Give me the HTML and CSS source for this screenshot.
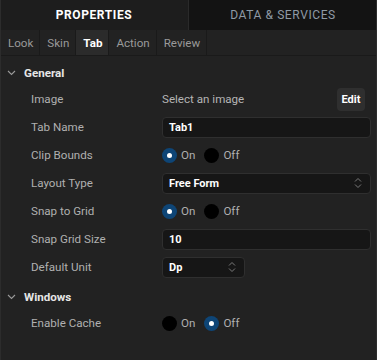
FILE: index.html
```html
<!DOCTYPE html>
<html lang="en">
<head>
	<meta charset="UTF-8">
	<meta name="viewport" content="width=device-width, initial-scale=1.0">
	<title>Properties</title>
	<link rel="stylesheet" href="styles.css">
</head>
<body>
	<div class="panel">
		<div class="top-tabs">
			<div class="top-tab active">PROPERTIES</div>
			<div class="top-tab">DATA &amp; SERVICES</div>
		</div>
		<div class="sub-tabs">
			<div class="sub-tab">Look</div>
			<div class="sub-tab">Skin</div>
			<div class="sub-tab active">Tab</div>
			<div class="sub-tab">Action</div>
			<div class="sub-tab">Review</div>
		</div>

		<div class="content">
			<div class="section">
				<div class="section-head">
					<svg class="chev" width="9" height="6" viewBox="0 0 9 6"><path d="M1 1 L4.5 4.5 L8 1" fill="none" stroke="#9a9a9a" stroke-width="1.1"/></svg>
					<span>General</span>
				</div>
				<div class="row">
					<div class="label">Image</div>
					<div class="value value-split">
						<span class="muted">Select an image</span>
						<button class="edit-btn">Edit</button>
					</div>
				</div>
				<div class="row">
					<div class="label">Tab Name</div>
					<div class="value"><div class="field">Tab1</div></div>
				</div>
				<div class="row">
					<div class="label">Clip Bounds</div>
					<div class="value radios">
						<span class="radio on"></span><span class="opt">On</span>
						<span class="radio"></span><span class="opt">Off</span>
					</div>
				</div>
				<div class="row">
					<div class="label">Layout Type</div>
					<div class="value">
						<div class="field select">Free Form
							<svg class="arrows" width="8" height="12" viewBox="0 0 8 12"><path d="M1 4.5 L4 1.5 L7 4.5 M1 7.5 L4 10.5 L7 7.5" fill="none" stroke="#7a7a7a" stroke-width="1"/></svg>
						</div>
					</div>
				</div>
				<div class="row">
					<div class="label">Snap to Grid</div>
					<div class="value radios">
						<span class="radio on"></span><span class="opt">On</span>
						<span class="radio"></span><span class="opt">Off</span>
					</div>
				</div>
				<div class="row">
					<div class="label">Snap Grid Size</div>
					<div class="value"><div class="field">10</div></div>
				</div>
				<div class="row">
					<div class="label">Default Unit</div>
					<div class="value">
						<div class="field select small">Dp
							<svg class="arrows" width="8" height="12" viewBox="0 0 8 12"><path d="M1 4.5 L4 1.5 L7 4.5 M1 7.5 L4 10.5 L7 7.5" fill="none" stroke="#7a7a7a" stroke-width="1"/></svg>
						</div>
					</div>
				</div>
			</div>

			<div class="section">
				<div class="section-head">
					<svg class="chev" width="9" height="6" viewBox="0 0 9 6"><path d="M1 1 L4.5 4.5 L8 1" fill="none" stroke="#9a9a9a" stroke-width="1.1"/></svg>
					<span>Windows</span>
				</div>
				<div class="row">
					<div class="label">Enable Cache</div>
					<div class="value radios">
						<span class="radio"></span><span class="opt">On</span>
						<span class="radio on"></span><span class="opt">Off</span>
					</div>
				</div>
			</div>
		</div>
	</div>
</body>
</html>
```
FILE: styles.css
```css
body {
	margin: 0;
	background-color: #222222;
	font-family: Roboto, "Liberation Sans", sans-serif;
	font-size: 11.6px;
}

.panel {
	width: 377px;
	height: 360px;
	box-sizing: border-box;
	background-color: #222222;
	border-left: 1px solid #2c2c2c;
	border-right: 1px solid #2c2c2c;
	overflow: hidden;
}

/* top level tabs */
.top-tabs {
	display: flex;
	height: 30px;
	margin: 0 -1px;
}

.top-tab {
	flex: 1;
	display: flex;
	align-items: center;
	justify-content: center;
	background-color: #131313;
	color: #8f9aa5;
	letter-spacing: 0.6px;
	font-size: 12px;
}

.top-tab.active {
	background-color: #1d1d1d;
	color: #ffffff;
	font-weight: bold;
	border-right: 1px solid #2a2a2a;
}

/* sub tabs */
.sub-tabs {
	display: flex;
	height: 25px;
	border-bottom: 1px solid #1a1a1a;
	background-color: #222222;
}

.sub-tab {
	display: flex;
	align-items: center;
	padding: 0 6px 0 7px;
	color: #9a9a9a;
	border-right: 1px solid #1a1a1a;
}

.sub-tab.active {
	background-color: #2b2b2b;
	color: #ffffff;
	font-weight: bold;
}

/* property list */
.content {
	padding-top: 5px;
}

.section + .section {
	margin-top: 4px;
}

.section-head {
	display: flex;
	align-items: center;
	height: 24px;
	padding-left: 6px;
	color: #e6e6e6;
	font-weight: bold;
}

.chev {
	margin-right: 8px;
}

.row {
	display: flex;
	align-items: center;
	height: 28px;
}

.label {
	width: 131px;
	padding-left: 30px;
	color: #b0b0b0;
}

.value {
	flex: 1;
	padding-right: 5px;
	display: flex;
	align-items: center;
}

.value-split {
	justify-content: space-between;
	padding-right: 11px;
}

.muted {
	color: #b5b5b5;
}

.edit-btn {
	width: 28px;
	height: 23px;
	border: none;
	border-radius: 4px;
	background-color: #2f2f2f;
	color: #ffffff;
	font-family: inherit;
	font-size: 11px;
	font-weight: bold;
	padding: 0;
}

.field {
	flex: 1;
	height: 21px;
	box-sizing: border-box;
	display: flex;
	align-items: center;
	padding: 0 6px;
	background-color: #161616;
	border: 1px solid #2f2f2f;
	border-radius: 4px;
	color: #ffffff;
	font-size: 11px;
	font-weight: bold;
}

.field.select {
	justify-content: space-between;
	padding-right: 8px;
}

.field.small {
	flex: none;
	width: 83px;
}

.radio {
	width: 15px;
	height: 15px;
	border-radius: 50%;
	background-color: #000000;
	box-sizing: border-box;
	position: relative;
}

.radio.on {
	background-color: #0e4576;
}

.radio.on::after {
	content: "";
	position: absolute;
	left: 5px;
	top: 5px;
	width: 5px;
	height: 5px;
	border-radius: 50%;
	background-color: #ffffff;
}

.opt {
	color: #b0b0b0;
	margin-left: 4px;
	margin-right: 9px;
}
```
